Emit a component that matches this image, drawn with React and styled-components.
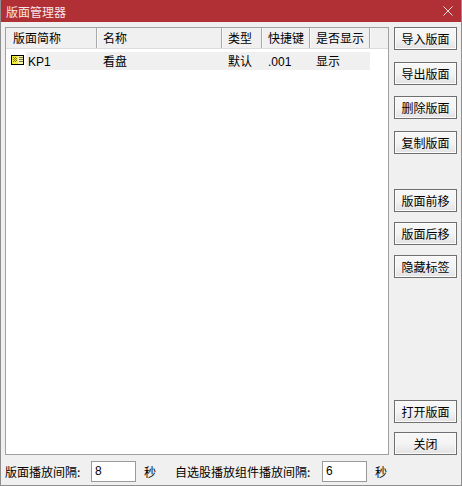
import React from "react";
import styled, { createGlobalStyle } from "styled-components";

const GlobalStyle = createGlobalStyle`
  html, body {
    margin: 0;
    padding: 0;
    background: #f0f0f0;
  }
  * {
    box-sizing: border-box;
  }
`;

const Window = styled.div`
  width: 462px;
  height: 486px;
  display: flex;
  flex-direction: column;
  background: #f0f0f0;
  border-left: 1px solid #8f8f8f;
  border-right: 1px solid #8f8f8f;
  border-bottom: 1px solid #8f8f8f;
  font-family: "Noto Sans CJK SC", "Liberation Sans", sans-serif;
  font-size: 12px;
  color: #000;
  overflow: hidden;
`;

const TitleBar = styled.div`
  height: 22px;
  margin: 0 -1px;
  padding: 0 9px 0 6px;
  flex: none;
  display: flex;
  align-items: center;
  justify-content: space-between;
  background: #b13035;
  color: #f6e6e6;
  font-size: 12px;
`;

const CloseIcon = styled.svg`
  width: 10px;
  height: 10px;
  display: block;
`;

const Main = styled.div`
  flex: 1;
  min-height: 0;
  display: flex;
  gap: 5px;
  padding: 5px 4px 0 4px;
`;

const ListPanel = styled.div`
  width: 384px;
  height: 428px;
  flex: none;
  border: 1px solid #a0a0a0;
  background: #fff;
`;

const Header = styled.div`
  height: 21px;
  display: flex;
  background: #f0f0f0;
  border-bottom: 1px solid #dcdcdc;
`;

const HeadCell = styled.div`
  width: ${(p) => p.$w}px;
  flex: none;
  padding-left: ${(p) => p.$pad ?? 6}px;
  line-height: 20px;
  border-right: 1px solid #a9a9a9;
  box-shadow: 1px 0 0 #fafafa;
  white-space: nowrap;
`;

const Row = styled.div`
  height: 18px;
  margin-top: 3px;
  display: flex;
  align-items: center;
`;

const IconCell = styled.div`
  width: 20px;
  flex: none;
  height: 100%;
  padding: 3px 0 0 5px;
`;

const Cell = styled.div`
  width: ${(p) => p.$w}px;
  flex: none;
  height: 100%;
  padding-left: ${(p) => p.$pad ?? 6}px;
  line-height: 17px;
  background: #f0f0f0;
  white-space: nowrap;
`;

const Latin = styled.span`
  font-family: "Liberation Sans", sans-serif;
`;

const Side = styled.div`
  width: 63px;
  flex: none;
  height: 428px;
  display: flex;
  flex-direction: column;
`;

const ActionButton = styled.button`
  width: 63px;
  height: 23px;
  flex: none;
  margin-top: ${(p) => p.$top ?? 0}px;
  padding: 0;
  border: 1px solid #6f6f6f;
  background: linear-gradient(#f7f7f7 0%, #f4f4f4 50%, #e2e2e2 100%);
  box-shadow: inset 0 0 0 1px #fbfbfb;
  font: inherit;
  color: #000;
`;

const Spacer = styled.div`
  flex: 1;
`;

const Footer = styled.div`
  height: 25px;
  flex: none;
  display: flex;
  align-items: center;
  padding: 0 0 3px 4px;
`;

const Label = styled.span`
  width: ${(p) => p.$w}px;
  flex: none;
  white-space: nowrap;
`;

const NumberBox = styled.input`
  width: 45px;
  height: 21px;
  flex: none;
  padding: 0 0 0 3px;
  border: 1px solid #9a9a9a;
  background: #fff;
  font-family: "Liberation Sans", sans-serif;
  font-size: 12px;
  color: #000;
  outline: none;
`;

const Unit = styled.span`
  width: ${(p) => p.$w}px;
  flex: none;
  padding-left: 8px;
`;

function PageIcon() {
  return (
    <svg width="13" height="10" viewBox="0 0 13 10" style={{ display: "block" }}>
      <rect x="0.5" y="0.5" width="12" height="9" fill="#fbf7a8" stroke="#000" />
      <rect x="1" y="1" width="6" height="8" fill="#f2ee3a" />
      <path d="M2 2h1v1H2zM4 2h1v1H4zM3 3h1v1H3zM5 3h1v1H5zM2 4h1v1H2zM4 4h1v1H4zM3 5h1v1H3zM5 5h1v1H5zM2 6h1v1H2zM4 6h1v1H4z" fill="#77761a" />
      <path d="M8 2.5h4M8 4.5h4M8 6.5h4" stroke="#6f6f50" strokeWidth="1" />
    </svg>
  );
}

const topButtons = [
  ["导入版面", 0],
  ["导出版面", 12],
  ["删除版面", 11],
  ["复制版面", 12],
  ["版面前移", 35],
  ["版面后移", 10],
  ["隐藏标签", 10],
];

export default function App() {
  return (
    <>
      <GlobalStyle />
      <Window>
        <TitleBar>
          <span>版面管理器</span>
          <CloseIcon viewBox="0 0 10 10">
            <path d="M0.5 0.5l9 9M9.5 0.5l-9 9" stroke="#f3dede" strokeWidth="1" fill="none" />
          </CloseIcon>
        </TitleBar>
        <Main>
          <ListPanel>
            <Header>
              <HeadCell $w={91} $pad={7}>版面简称</HeadCell>
              <HeadCell $w={125}>名称</HeadCell>
              <HeadCell $w={40}>类型</HeadCell>
              <HeadCell $w={48}>快捷键</HeadCell>
              <HeadCell $w={60}>是否显示</HeadCell>
            </Header>
            <Row>
              <IconCell><PageIcon /></IconCell>
              <Cell $w={71} $pad={2}><Latin>KP1</Latin></Cell>
              <Cell $w={125}>看盘</Cell>
              <Cell $w={40}>默认</Cell>
              <Cell $w={48}><Latin>.001</Latin></Cell>
              <Cell $w={60}>显示</Cell>
            </Row>
          </ListPanel>
          <Side>
            {topButtons.map(([text, top]) => (
              <ActionButton key={text} $top={top}>{text}</ActionButton>
            ))}
            <Spacer />
            <ActionButton>打开版面</ActionButton>
            <ActionButton $top={9}>关闭</ActionButton>
          </Side>
        </Main>
        <Footer>
          <Label $w={86}>版面播放间隔:</Label>
          <NumberBox defaultValue="8" />
          <Unit $w={39}>秒</Unit>
          <Label $w={147}>自选股播放组件播放间隔:</Label>
          <NumberBox defaultValue="6" />
          <Unit $w={30}>秒</Unit>
        </Footer>
      </Window>
    </>
  );
}
